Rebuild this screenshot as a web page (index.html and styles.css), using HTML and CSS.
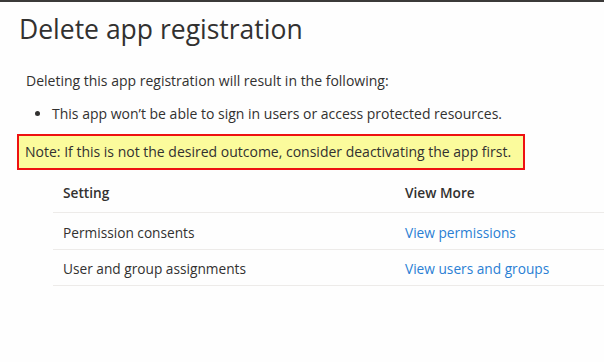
FILE: index.html
```html
<!DOCTYPE html>
<html>
<head>
<meta charset="utf-8">
<link rel="stylesheet" href="styles.css">
</head>
<body>
<div class="panel">
  <h1 class="title">Delete app registration</h1>
  <p class="intro">Deleting this app registration will result in the following:</p>
  <ul class="effects">
    <li>This app won’t be able to sign in users or access protected resources.</li>
  </ul>
  <div class="note">Note: If this is not the desired outcome, consider deactivating the app first.</div>
  <div class="table">
    <div class="row head">
      <div class="c1">Setting</div>
      <div class="c2">View More</div>
    </div>
    <div class="row">
      <div class="c1">Permission consents</div>
      <div class="c2"><a class="link" href="#">View permissions</a></div>
    </div>
    <div class="row">
      <div class="c1">User and group assignments</div>
      <div class="c2"><a class="link" href="#">View users and groups</a></div>
    </div>
  </div>
</div>
</body>
</html>
```
FILE: styles.css
```css
html, body {
  margin: 0;
  padding: 0;
  background: #fefefe;
}
body {
  font-family: "Open Sans", "Noto Sans", sans-serif;
  color: #323130;
  width: 604px;
  height: 362px;
  overflow: hidden;
}
.panel {
  border-top: 2px solid #3b3a39;
}
.title {
  margin: 11px 0 0 19px;
  font-size: 26.5px;
  font-weight: 400;
  line-height: 32px;
  letter-spacing: 0;
}
.intro {
  margin: 26px 0 0 26px;
  font-size: 14px;
  line-height: 20px;
}
.effects {
  margin: 13px 0 0 0;
  padding: 0 0 0 52px;
  font-size: 14px;
  line-height: 20px;
}
.effects li {
  margin: 0;
}
.note {
  margin: 10px 0 0 17px;
  width: 508px;
  box-sizing: border-box;
  height: 36px;
  border: 2px solid #ee1111;
  background: #fbfb9c;
  font-size: 14px;
  line-height: 31px;
  padding-left: 6px;
}
.table {
  margin: 1px 0 0 53px;
}
.row {
  display: flex;
  border-bottom: 1px solid #edebe9;
  height: 36px;
  box-sizing: content-box;
  align-items: center;
  font-size: 13.7px;
  padding-top: 2px;
  height: 34px;
}
.row.head {
  font-weight: 600;
  height: 39px;
}
.row:last-child {
  height: 33px;
}
.c1 {
  width: 342px;
  padding-left: 10px;
}
.c2 {
  flex: 1;
}
.link {
  color: #2a7fd4;
  text-decoration: none;
}
```
